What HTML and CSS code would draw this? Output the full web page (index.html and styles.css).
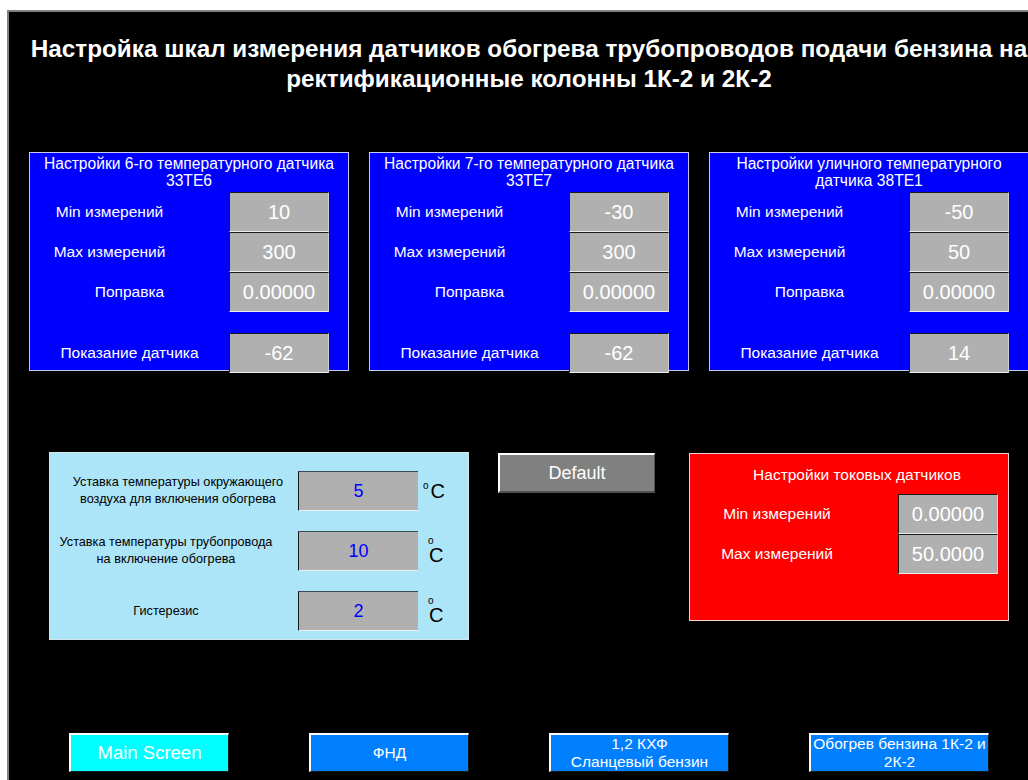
FILE: index.html
```html
<!DOCTYPE html>
<html lang="ru">
<head>
<meta charset="utf-8">
<title>Настройка шкал измерения датчиков</title>
<link rel="stylesheet" href="styles.css">
</head>
<body>
<div class="screen">
  <h1 class="title">Настройка шкал измерения датчиков обогрева трубопроводов подачи бензина на<br>ректификационные колонны 1К-2 и 2К-2</h1>

  <div class="sensors">
    <section class="sensor">
      <div class="sensor-head">Настройки 6-го температурного датчика<br>33TE6</div>
      <div class="row"><span class="lbl lbl-wide">Min измерений</span><span class="field">10</span></div>
      <div class="row"><span class="lbl lbl-wide">Max измерений</span><span class="field">300</span></div>
      <div class="row"><span class="lbl">Поправка</span><span class="field">0.00000</span></div>
      <div class="row row-reading"><span class="lbl">Показание датчика</span><span class="field">-62</span></div>
    </section>
    <section class="sensor">
      <div class="sensor-head">Настройки 7-го температурного датчика<br>33TE7</div>
      <div class="row"><span class="lbl lbl-wide">Min измерений</span><span class="field">-30</span></div>
      <div class="row"><span class="lbl lbl-wide">Max измерений</span><span class="field">300</span></div>
      <div class="row"><span class="lbl">Поправка</span><span class="field">0.00000</span></div>
      <div class="row row-reading"><span class="lbl">Показание датчика</span><span class="field">-62</span></div>
    </section>
    <section class="sensor">
      <div class="sensor-head">Настройки уличного температурного<br>датчика 38TE1</div>
      <div class="row"><span class="lbl lbl-wide">Min измерений</span><span class="field">-50</span></div>
      <div class="row"><span class="lbl lbl-wide">Max измерений</span><span class="field">50</span></div>
      <div class="row"><span class="lbl">Поправка</span><span class="field">0.00000</span></div>
      <div class="row row-reading"><span class="lbl">Показание датчика</span><span class="field">14</span></div>
    </section>
  </div>

  <div class="lower">
    <section class="setpoints">
      <div class="sp-row">
        <span class="sp-lbl sp-lbl-shift">Уставка температуры окружающего<br>воздуха для включения обогрева</span>
        <span class="sp-field">5</span>
        <span class="unit"><span class="deg">o</span>C</span>
      </div>
      <div class="sp-row">
        <span class="sp-lbl">Уставка температуры трубопровода<br>на включение обогрева</span>
        <span class="sp-field">10</span>
        <span class="unit unit-stack"><span class="deg">o</span>C</span>
      </div>
      <div class="sp-row">
        <span class="sp-lbl">Гистерезис</span>
        <span class="sp-field">2</span>
        <span class="unit unit-stack"><span class="deg">o</span>C</span>
      </div>
    </section>

    <button class="btn-default" type="button">Default</button>

    <section class="current">
      <div class="current-head">Настройки токовых датчиков</div>
      <div class="cur-row"><span class="cur-lbl">Min измерений</span><span class="field">0.00000</span></div>
      <div class="cur-row"><span class="cur-lbl">Max измерений</span><span class="field">50.0000</span></div>
    </section>
  </div>

  <nav class="nav">
    <button class="nav-btn nav-main" type="button">Main Screen</button>
    <button class="nav-btn" type="button">ФНД</button>
    <button class="nav-btn nav-wide" type="button">1,2 КХФ<br>Сланцевый бензин</button>
    <button class="nav-btn nav-wide" type="button">Обогрев бензина 1К-2 и<br>2К-2</button>
  </nav>
</div>
</body>
</html>
```

FILE: styles.css
```css
html, body {
  margin: 0;
  padding: 0;
  background: #ffffff;
  overflow: hidden;
}

body {
  font-family: "Liberation Sans", Arial, sans-serif;
}

.screen {
  margin: 10px 0 0 7px;
  width: 1100px;
  height: 800px;
  background: #000000;
  border-top: 2px solid #808080;
  border-left: 2px solid #808080;
}

.title {
  width: 1040px;
  margin: 0;
  padding-top: 22px;
  font-size: 24.3px;
  line-height: 30px;
  font-weight: bold;
  color: #ffffff;
  text-align: center;
  white-space: nowrap;
}

/* three temperature sensor panels */
.sensors {
  display: flex;
  gap: 20px;
  margin: 58px 0 0 20px;
}

.sensor {
  box-sizing: border-box;
  width: 320px;
  height: 219px;
  background: #0000ff;
  border: 1px solid #c8c8f0;
  color: #ffffff;
}

.sensor-head {
  box-sizing: border-box;
  height: 39px;
  padding-top: 2px;
  font-size: 15.6px;
  line-height: 17px;
  text-align: center;
  white-space: nowrap;
}

.row {
  display: flex;
  align-items: center;
  height: 40px;
}

.row-reading {
  margin-top: 21px;
}

.lbl {
  flex: 1;
  text-align: center;
  font-size: 15.5px;
}

.lbl-wide {
  padding-right: 40px;
}

.field {
  box-sizing: border-box;
  width: 100px;
  height: 40px;
  margin-right: 19px;
  background: #b0b0b0;
  border-top: 1px solid #1a1a1a;
  border-left: 1px solid #1a1a1a;
  border-right: 1px solid #d0d0d0;
  border-bottom: 1px solid #ececec;
  color: #ffffff;
  font-size: 20px;
  display: flex;
  align-items: center;
  justify-content: center;
}

/* lower area: setpoints, default button, current sensors */
.lower {
  display: flex;
  align-items: flex-start;
  margin: 81px 0 0 40px;
}

.setpoints {
  box-sizing: border-box;
  width: 420px;
  height: 188px;
  padding-top: 18px;
  background: #ace4f8;
  border: 1px solid #d4e4ea;
  display: flex;
  flex-direction: column;
  gap: 20px;
}

.sp-row {
  display: flex;
  align-items: center;
  height: 40px;
}

.sp-lbl {
  box-sizing: border-box;
  width: 248px;
  padding-right: 16px;
  text-align: center;
  font-size: 12.7px;
  line-height: 17px;
  color: #000000;
  white-space: nowrap;
}

.sp-lbl-shift {
  padding-right: 0;
  padding-left: 8px;
}

.sp-field {
  box-sizing: border-box;
  width: 120px;
  height: 40px;
  background: #b0b0b0;
  border-top: 1px solid #3a4a50;
  border-left: 1px solid #1a1a1a;
  border-bottom: 1px solid #f0f0f0;
  color: #0000ff;
  font-size: 18px;
  display: flex;
  align-items: center;
  justify-content: center;
}

.unit {
  display: inline-flex;
  align-items: flex-start;
  margin-left: 5px;
  font-size: 20px;
  line-height: 20px;
  color: #000000;
}

.deg {
  font-size: 10px;
  line-height: 10px;
  margin-right: 2px;
}

.unit-stack {
  flex-direction: column;
  align-items: flex-start;
  margin-left: 11px;
}

.unit-stack .deg {
  margin: 0 0 0 -1px;
  line-height: 8px;
}

.btn-default {
  box-sizing: border-box;
  width: 157px;
  height: 40px;
  margin: 1px 0 0 29px;
  padding: 0;
  background: #808080;
  border-top: 2px solid #ffffff;
  border-left: 2px solid #ffffff;
  border-right: 1px solid #505050;
  border-bottom: 2px solid #505050;
  color: #ffffff;
  font-family: "Liberation Sans", Arial, sans-serif;
  font-size: 18px;
}

.current {
  box-sizing: border-box;
  width: 320px;
  height: 168px;
  margin: 1px 0 0 34px;
  background: #ff0000;
  border: 1px solid #f0d0d0;
  color: #ffffff;
}

.current-head {
  box-sizing: border-box;
  height: 40px;
  padding: 12px 0 0 16px;
  font-size: 15.5px;
  line-height: 17px;
  text-align: center;
}

.cur-row {
  display: flex;
  align-items: center;
  height: 40px;
}

.cur-lbl {
  box-sizing: border-box;
  width: 208px;
  padding-right: 34px;
  text-align: center;
  font-size: 15.5px;
}

.current .field {
  margin-right: 0;
}

/* bottom navigation */
.nav {
  display: flex;
  gap: 80px;
  margin: 93px 0 0 60px;
}

.nav-btn {
  box-sizing: border-box;
  width: 160px;
  height: 39px;
  padding: 0;
  background: #0080ff;
  border-top: 2px solid #ffffff;
  border-left: 2px solid #ffffff;
  border-right: 1px solid #1a1a1a;
  border-bottom: 1px solid #1a1a1a;
  color: #ffffff;
  font-family: "Liberation Sans", Arial, sans-serif;
  font-size: 15.5px;
  line-height: 18px;
  white-space: nowrap;
}

.nav-main {
  background: #00ffff;
  font-size: 18.5px;
}

.nav-wide {
  width: 180px;
}
```
